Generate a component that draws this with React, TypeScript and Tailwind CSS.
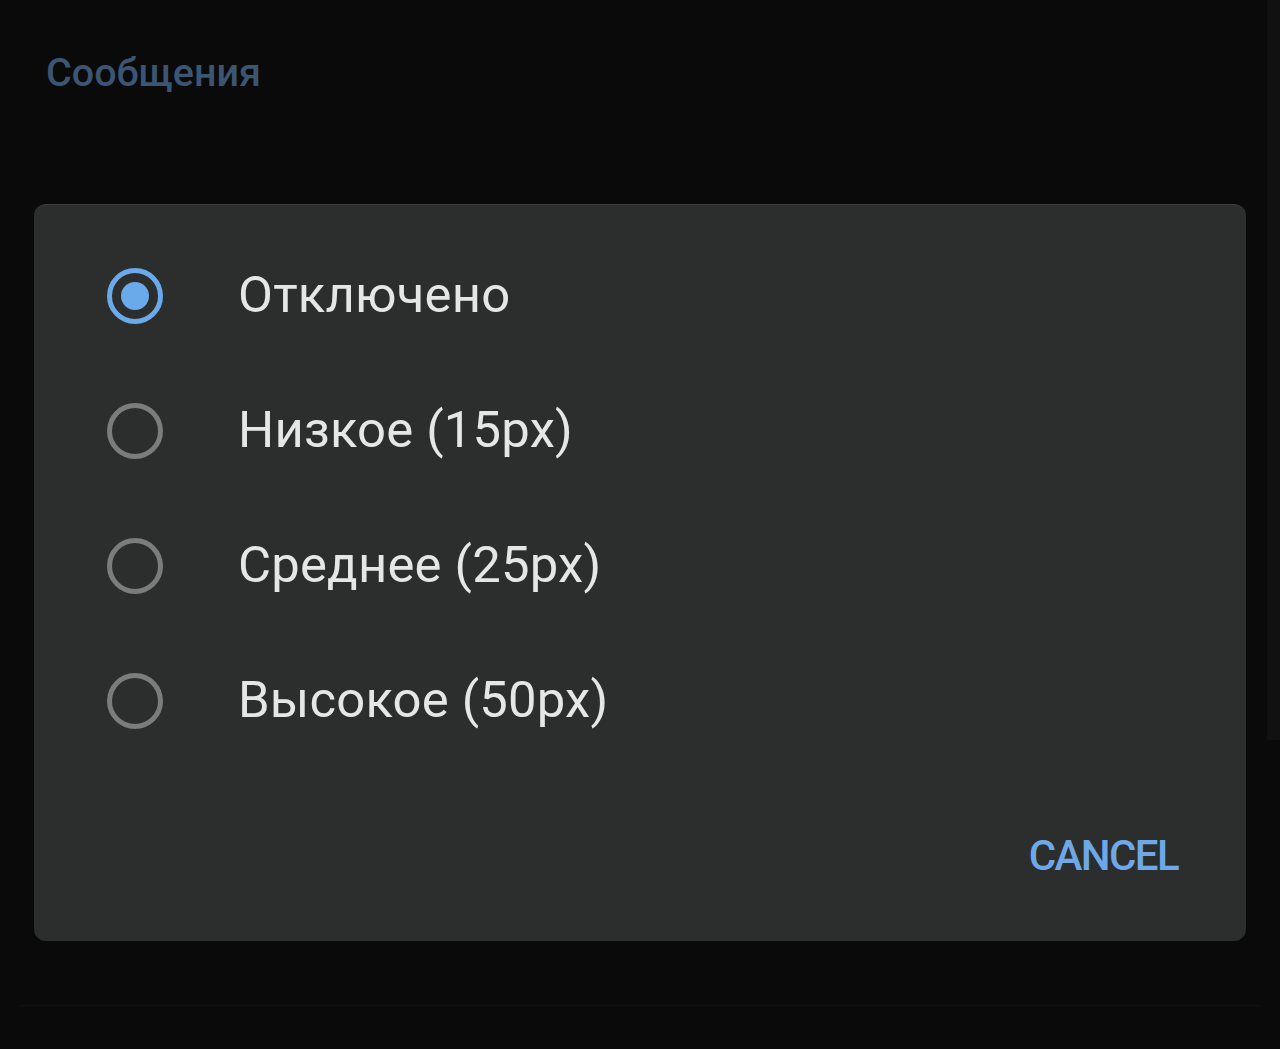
import React from 'react';

type Option = {
  label: string;
  selected?: boolean;
};

const options: Option[] = [
  { label: 'Отключено', selected: true },
  { label: 'Низкое (15px)' },
  { label: 'Среднее (25px)' },
  { label: 'Высокое (50px)' },
];

function Radio({ selected }: { selected?: boolean }) {
  if (selected) {
    return (
      <div className="w-[56px] h-[56px] rounded-full border-[5px] border-[#6aa9ea] flex items-center justify-center shrink-0">
        <div className="w-[28px] h-[28px] rounded-full bg-[#6aa9ea]" />
      </div>
    );
  }
  return <div className="w-[56px] h-[56px] rounded-full border-[5px] border-[#7b7c7c] shrink-0" />;
}

export default function App() {
  return (
    <div
      className="relative w-[1280px] h-[1049px] overflow-hidden bg-[#0a0a0a]"
      style={{ fontFamily: 'Roboto, "Noto Sans", sans-serif' }}
    >
      <div className="absolute right-0 top-0 w-[13px] h-[740px] bg-[#111111]" />

      <div className="pl-[46px] pt-[48px] text-[39.5px] leading-[50px] font-medium text-[#3b5572]">
        Сообщения
      </div>

      <div className="relative ml-[34px] mt-[106px] w-[1212px] h-[737px] rounded-[12px] bg-[#2c2d2d] border-t border-[#3c3d3d] flex flex-col">
        <div className="pt-[23px]">
          {options.map((o) => (
            <div key={o.label} className="h-[135px] flex items-center pl-[73px]">
              <Radio selected={o.selected} />
              <span className="ml-[75px] text-[50.8px] leading-none text-[#e6e6e6] tracking-[0.2px]">
                {o.label}
              </span>
            </div>
          ))}
        </div>
        <div className="flex justify-end pr-[68px] mt-[67px]">
          <span className="text-[42px] leading-none font-medium text-[#6fa8e6] tracking-[-1.6px]">
            CANCEL
          </span>
        </div>
      </div>

      <div className="mx-[20px] mt-[64px] h-[1px] bg-[#101010]" />
    </div>
  );
}
